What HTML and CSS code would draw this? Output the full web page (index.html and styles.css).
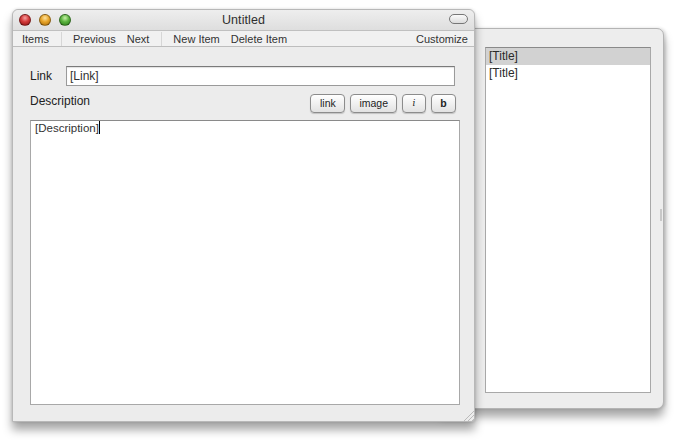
FILE: index.html
```html
<!DOCTYPE html>
<html>
<head>
<meta charset="utf-8">
<link rel="stylesheet" href="styles.css">
</head>
<body>
<div class="desktop">
  <div class="drawer">
    <div class="drawer-list">
      <div class="row selected">[Title]</div>
      <div class="row">[Title]</div>
    </div>
    <div class="drawer-grip"></div>
  </div>
  <div class="window">
    <div class="titlebar">
      <div class="lights">
        <span class="light red"></span>
        <span class="light yellow"></span>
        <span class="light green"></span>
      </div>
      <div class="title">Untitled</div>
      <span class="pill"></span>
    </div>
    <div class="toolbar">
      <span class="tb">Items</span>
      <span class="sep"></span>
      <span class="tb">Previous</span>
      <span class="tb">Next</span>
      <span class="sep"></span>
      <span class="tb">New Item</span>
      <span class="tb">Delete Item</span>
      <span class="spacer"></span>
      <span class="tb">Customize</span>
    </div>
    <div class="content">
      <div class="link-row">
        <label class="lbl">Link</label>
        <div class="field">[Link]</div>
      </div>
      <div class="desc-row">
        <label class="lbl">Description</label>
        <div class="buttons">
          <span class="btn w-link">link</span>
          <span class="btn">image</span>
          <span class="btn w-i"><i>i</i></span>
          <span class="btn w-b"><b>b</b></span>
        </div>
      </div>
      <div class="textarea">[Description]<span class="caret"></span></div>
    </div>
    <div class="grip"></div>
  </div>
</div>
</body>
</html>
```
FILE: styles.css
```css
* { box-sizing: border-box; }
html, body { margin: 0; padding: 0; background: #fff; }
body { width: 680px; height: 444px; overflow: hidden; font-family: "Liberation Sans", Arial, sans-serif; color: #2a2a2a; }
.desktop { position: relative; width: 680px; height: 444px; }

.window {
  position: absolute; left: 12px; top: 9px; width: 463px; height: 413px;
  background: #ececec;
  border: 1px solid #b8b8b8;
  border-radius: 6px 6px 0 0;
  box-shadow: 0 8px 10px rgba(0,0,0,0.35), 0 0 3px rgba(0,0,0,0.15);
  display: flex; flex-direction: column;
}
.titlebar {
  height: 21px; display: flex; align-items: center; position: relative;
  background: linear-gradient(#eeeeee, #dedede);
  border-radius: 6px 6px 0 0;
  border-bottom: 1px solid #c0c0c0;
  padding: 0 6px;
}
.lights { display: flex; gap: 8px; position: absolute; left: 6px; top: 4px; }
.light { width: 12px; height: 12px; border-radius: 50%; display: block; border: 1px solid rgba(0,0,0,0.35); }
.red { background: radial-gradient(circle at 50% 30%, #f4a0a0 0, #d43a3a 45%, #8a1010 100%); }
.yellow { background: radial-gradient(circle at 50% 30%, #fbe2a0 0, #e8a52a 45%, #a86a08 100%); }
.green { background: radial-gradient(circle at 50% 30%, #c8f0a8 0, #5cb440 45%, #2a7a18 100%); }
.title { flex: 1; text-align: center; font-size: 12.5px; color: #2e2e2e; letter-spacing: 0.1px; }
.pill { position: absolute; right: 6px; top: 4px; width: 19px; height: 10px; border: 1.5px solid #777; border-radius: 5px; background: linear-gradient(#fafafa, #dcdcdc); }

.toolbar {
  height: 16px; display: flex; align-items: center;
  background: #f1f1f1;
  border-bottom: 1px solid #bdbdbd;
  padding: 0 6px 0 9px;
  font-size: 11px; color: #333;
}
.tb { margin-right: 11px; }
.tb:last-child { margin-right: 0; }
.sep { width: 1px; height: 14px; background: #d6d6d6; margin: 0 11px 0 1px; }
.spacer { flex: 1; }

.content { flex: 1; display: flex; flex-direction: column; padding: 19px 14px 16px 17px; }
.lbl { font-size: 12px; color: #222; }
.link-row { display: flex; align-items: center; height: 20px; }
.link-row .lbl { width: 36px; }
.field {
  flex: 1; height: 20px; margin-right: 5px; background: #fff;
  border: 1px solid #9a9a9a; border-top-color: #7a7a7a;
  box-shadow: inset 0 1px 1px rgba(0,0,0,0.12);
  font-size: 12px; line-height: 18px; padding-left: 3px; color: #333;
}
.desc-row { display: flex; align-items: center; height: 20px; margin-top: 7px; }
.desc-row .lbl { flex: 1; position: relative; top: -2px; }
.buttons { display: flex; gap: 5px; margin-right: 4px; }
.btn {
  height: 19px; border: 1px solid #8c8c8c; border-radius: 4px;
  background: linear-gradient(#ffffff, #eeeeee 60%, #e2e2e2);
  box-shadow: 0 1px 1px rgba(0,0,0,0.18);
  font-size: 10.5px; line-height: 17px; padding: 0 8px; color: #222; text-align: center;
}
.w-link { width: 35px; padding: 0; }
.w-i { width: 24px; padding: 0; font-family: "DejaVu Serif", serif; font-size: 9px; }
.w-b { width: 25px; padding: 0; }
.textarea {
  flex: 1; margin-top: 7px; background: #fff;
  border: 1px solid #a8a8a8; border-top-color: #8a8a8a;
  font-size: 11.5px; padding: 0 4px; color: #333;
}
.caret { display: inline-block; width: 1px; height: 13px; background: #000; vertical-align: -2px; }
.grip {
  position: absolute; right: 0; bottom: 0; width: 11px; height: 11px;
  background: repeating-linear-gradient(135deg, transparent 0 2px, #bbb 2px 3px);
  clip-path: polygon(100% 0, 100% 100%, 0 100%);
}

.drawer {
  position: absolute; left: 440px; top: 28px; width: 224px; height: 381px;
  background: #ededed;
  border: 1px solid #b4b4b4;
  border-radius: 0 7px 7px 0;
  box-shadow: 0 8px 10px rgba(0,0,0,0.35), 2px 0 3px rgba(0,0,0,0.12);
  padding: 18px 12px 15px 44px;
  display: flex;
}
.drawer-list {
  flex: 1; background: #fff; border: 1px solid #a8a8a8; border-top-color: #8a8a8a;
  font-size: 12px; color: #2a2a2a;
}
.row { height: 17px; line-height: 17px; padding-left: 3px; }
.row.selected { background: #d2d2d2; }
.drawer-grip { position: absolute; right: 1px; top: 180px; width: 2px; height: 12px; background: #c8c8c8; }
```
